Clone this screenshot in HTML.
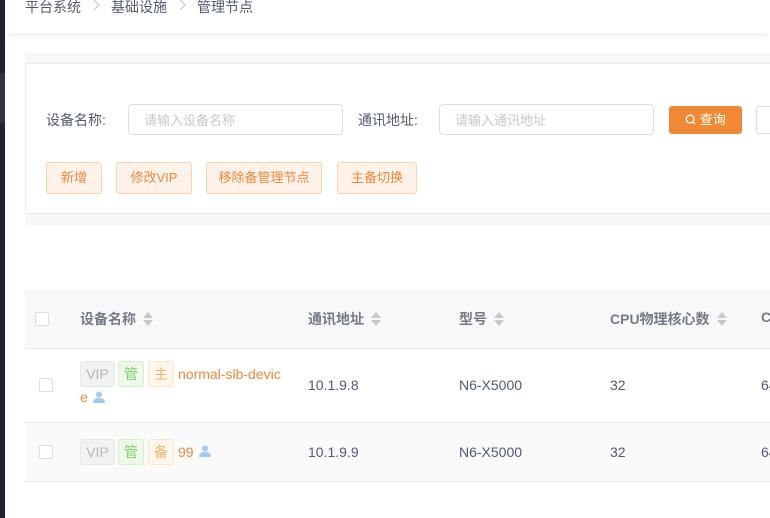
<!DOCTYPE html>
<html><head><meta charset="utf-8"><style>
*{margin:0;padding:0;box-sizing:border-box}
body{width:770px;height:518px;overflow:hidden;background:#fff;font-family:"Liberation Sans","Noto Sans CJK SC",sans-serif;font-size:13px;color:#515a6e;position:relative}
.a{position:absolute}
.strip{left:0;top:0;width:5px;height:518px;background:#1f2330}
.hdr{left:5px;top:0;width:765px;height:33px;background:#fff;box-shadow:0 2px 8px rgba(0,0,0,.08)}
.bc{top:-3px;font-size:14px;color:#515a6e}
.gray{left:25px;top:53px;width:745px;height:172px;background:#f5f7f9}
.card{left:25px;top:63px;width:750px;height:151px;background:#fff;border:1px solid #e8eaec;border-radius:3px}
.inp{height:31px;border:1px solid #dcdee2;border-radius:4px;color:#c5c8ce;font-size:13px;padding:5px 15px;background:#fff}
.btn{height:32px;border:1px solid #fbd4b4;background:#fef2e9;color:#f0883a;border-radius:3px;font-size:13px;text-align:center;line-height:30px}
.th{top:290px;left:25px;width:745px;height:59px;background:#f8f8f9;border-bottom:1px solid #e8eaec}
.r1{top:349px;left:25px;width:745px;height:74px;background:#fff;border-bottom:1px solid #e8eaec}
.r2{top:423px;left:25px;width:745px;height:59px;background:#fafafa;border-bottom:1px solid #e8eaec}
.hc{font-weight:bold;color:#757b86;font-size:14px}
.cb{width:14px;height:14px;border:1px solid #dcdee2;border-radius:2px;background:#fff}
.sort{display:inline-block;vertical-align:middle;margin-left:7px;width:10px;height:14px;position:relative;top:-1px}
.sort:before{content:"";position:absolute;left:0;top:0;border:5px solid transparent;border-top:0;border-bottom:6px solid #c5c8ce}
.sort:after{content:"";position:absolute;left:0;top:8px;border:5px solid transparent;border-bottom:0;border-top:6px solid #c5c8ce}
.tag{height:26px;border-radius:3px;font-size:14px;text-align:center;line-height:24px;border:1px solid}
.vip{background:#f2f2f2;border-color:#e8e8e8;color:#b8b8b8}
.g{background:#eef9ea;border-color:#d4f0c8;color:#7fcf6a}
.o{background:#fff7ec;border-color:#fde6c8;color:#f0b567}
.td{font-size:14px;color:#515a6e}
.nm{color:#f0883a;font-size:14px}
.lbl{font-size:14px;color:#515a6e}
</style></head><body>
<div class="a strip"></div>
<div class="a" style="left:0;top:73px;width:5px;height:50px;background:#30343e"></div>
<div class="a hdr"></div>
<div class="a bc" style="left:25px">平台系统</div>
<svg class="a" style="left:93px;top:0" width="8" height="12" viewBox="0 0 8 12"><path d="M1 0L6 5L1 10" fill="none" stroke="#c5c8ce" stroke-width="1.2"/></svg>
<div class="a bc" style="left:111px">基础设施</div>
<svg class="a" style="left:179px;top:0" width="8" height="12" viewBox="0 0 8 12"><path d="M1 0L6 5L1 10" fill="none" stroke="#c5c8ce" stroke-width="1.2"/></svg>
<div class="a bc" style="left:197px">管理节点</div>
<div class="a gray"></div>
<div class="a card"></div>
<div class="a lbl" style="left:46px;top:110px">设备名称:</div>
<div class="a inp" style="left:128px;top:104px;width:215px">请输入设备名称</div>
<div class="a lbl" style="left:358px;top:110px">通讯地址:</div>
<div class="a inp" style="left:439px;top:104px;width:215px">请输入通讯地址</div>
<div class="a" style="left:669px;top:106px;width:73px;height:28px;background:#f08934;border-radius:3px;color:#fff;font-size:13px;line-height:28px;text-align:center">
<svg width="11" height="11" viewBox="0 0 12 12" style="vertical-align:-1px"><circle cx="5.5" cy="5.5" r="4.2" fill="none" stroke="#fff" stroke-width="1.4"/><path d="M8.5 8.5L11 11" stroke="#fff" stroke-width="1.4"/></svg> 查询</div>
<div class="a" style="left:756px;top:106px;width:30px;height:28px;border:1px solid #dcdee2;border-radius:3px;background:#fff"></div>
<div class="a btn" style="left:46px;top:162px;width:56px">新增</div>
<div class="a btn" style="left:116px;top:162px;width:76px">修改VIP</div>
<div class="a btn" style="left:206px;top:162px;width:116px">移除备管理节点</div>
<div class="a btn" style="left:337px;top:162px;width:80px">主备切换</div>

<div class="a th"></div>
<div class="a cb" style="left:35px;top:312px"></div>
<div class="a hc" style="left:80px;top:309px">设备名称<span class="sort"></span></div>
<div class="a hc" style="left:308px;top:309px">通讯地址<span class="sort"></span></div>
<div class="a hc" style="left:459px;top:309px">型号<span class="sort"></span></div>
<div class="a hc" style="left:610px;top:309px">CPU物理核心数<span class="sort"></span></div>
<div class="a hc" style="left:761px;top:309px">C</div>

<div class="a r1"></div>
<div class="a cb" style="left:39px;top:378px"></div>
<div class="a tag vip" style="left:80px;top:361px;width:35px">VIP</div>
<div class="a tag g" style="left:118px;top:361px;width:26px">管</div>
<div class="a tag o" style="left:148px;top:361px;width:26px">主</div>
<div class="a nm" style="left:178px;top:366px">normal-slb-devic</div>
<div class="a nm" style="left:80px;top:389px">e</div>
<svg class="a" style="left:93px;top:391px" width="12" height="12" viewBox="0 0 12 12"><circle cx="6" cy="3.5" r="3" fill="#9ecbf5"/><path d="M0 12c0-4 2.5-5 6-5s6 1 6 5z" fill="#9ecbf5"/></svg>
<div class="a td" style="left:308px;top:377px">10.1.9.8</div>
<div class="a td" style="left:459px;top:377px">N6-X5000</div>
<div class="a td" style="left:610px;top:377px">32</div>
<div class="a td" style="left:761px;top:377px">64</div>

<div class="a r2"></div>
<div class="a cb" style="left:39px;top:445px"></div>
<div class="a tag vip" style="left:80px;top:439px;width:35px">VIP</div>
<div class="a tag g" style="left:118px;top:439px;width:26px">管</div>
<div class="a tag o" style="left:148px;top:439px;width:26px">备</div>
<div class="a nm" style="left:178px;top:444px">99</div>
<svg class="a" style="left:199px;top:445px" width="12" height="12" viewBox="0 0 12 12"><circle cx="6" cy="3.5" r="3" fill="#9ecbf5"/><path d="M0 12c0-4 2.5-5 6-5s6 1 6 5z" fill="#9ecbf5"/></svg>
<div class="a td" style="left:308px;top:444px">10.1.9.9</div>
<div class="a td" style="left:459px;top:444px">N6-X5000</div>
<div class="a td" style="left:610px;top:444px">32</div>
<div class="a td" style="left:761px;top:444px">64</div>
</body></html>
